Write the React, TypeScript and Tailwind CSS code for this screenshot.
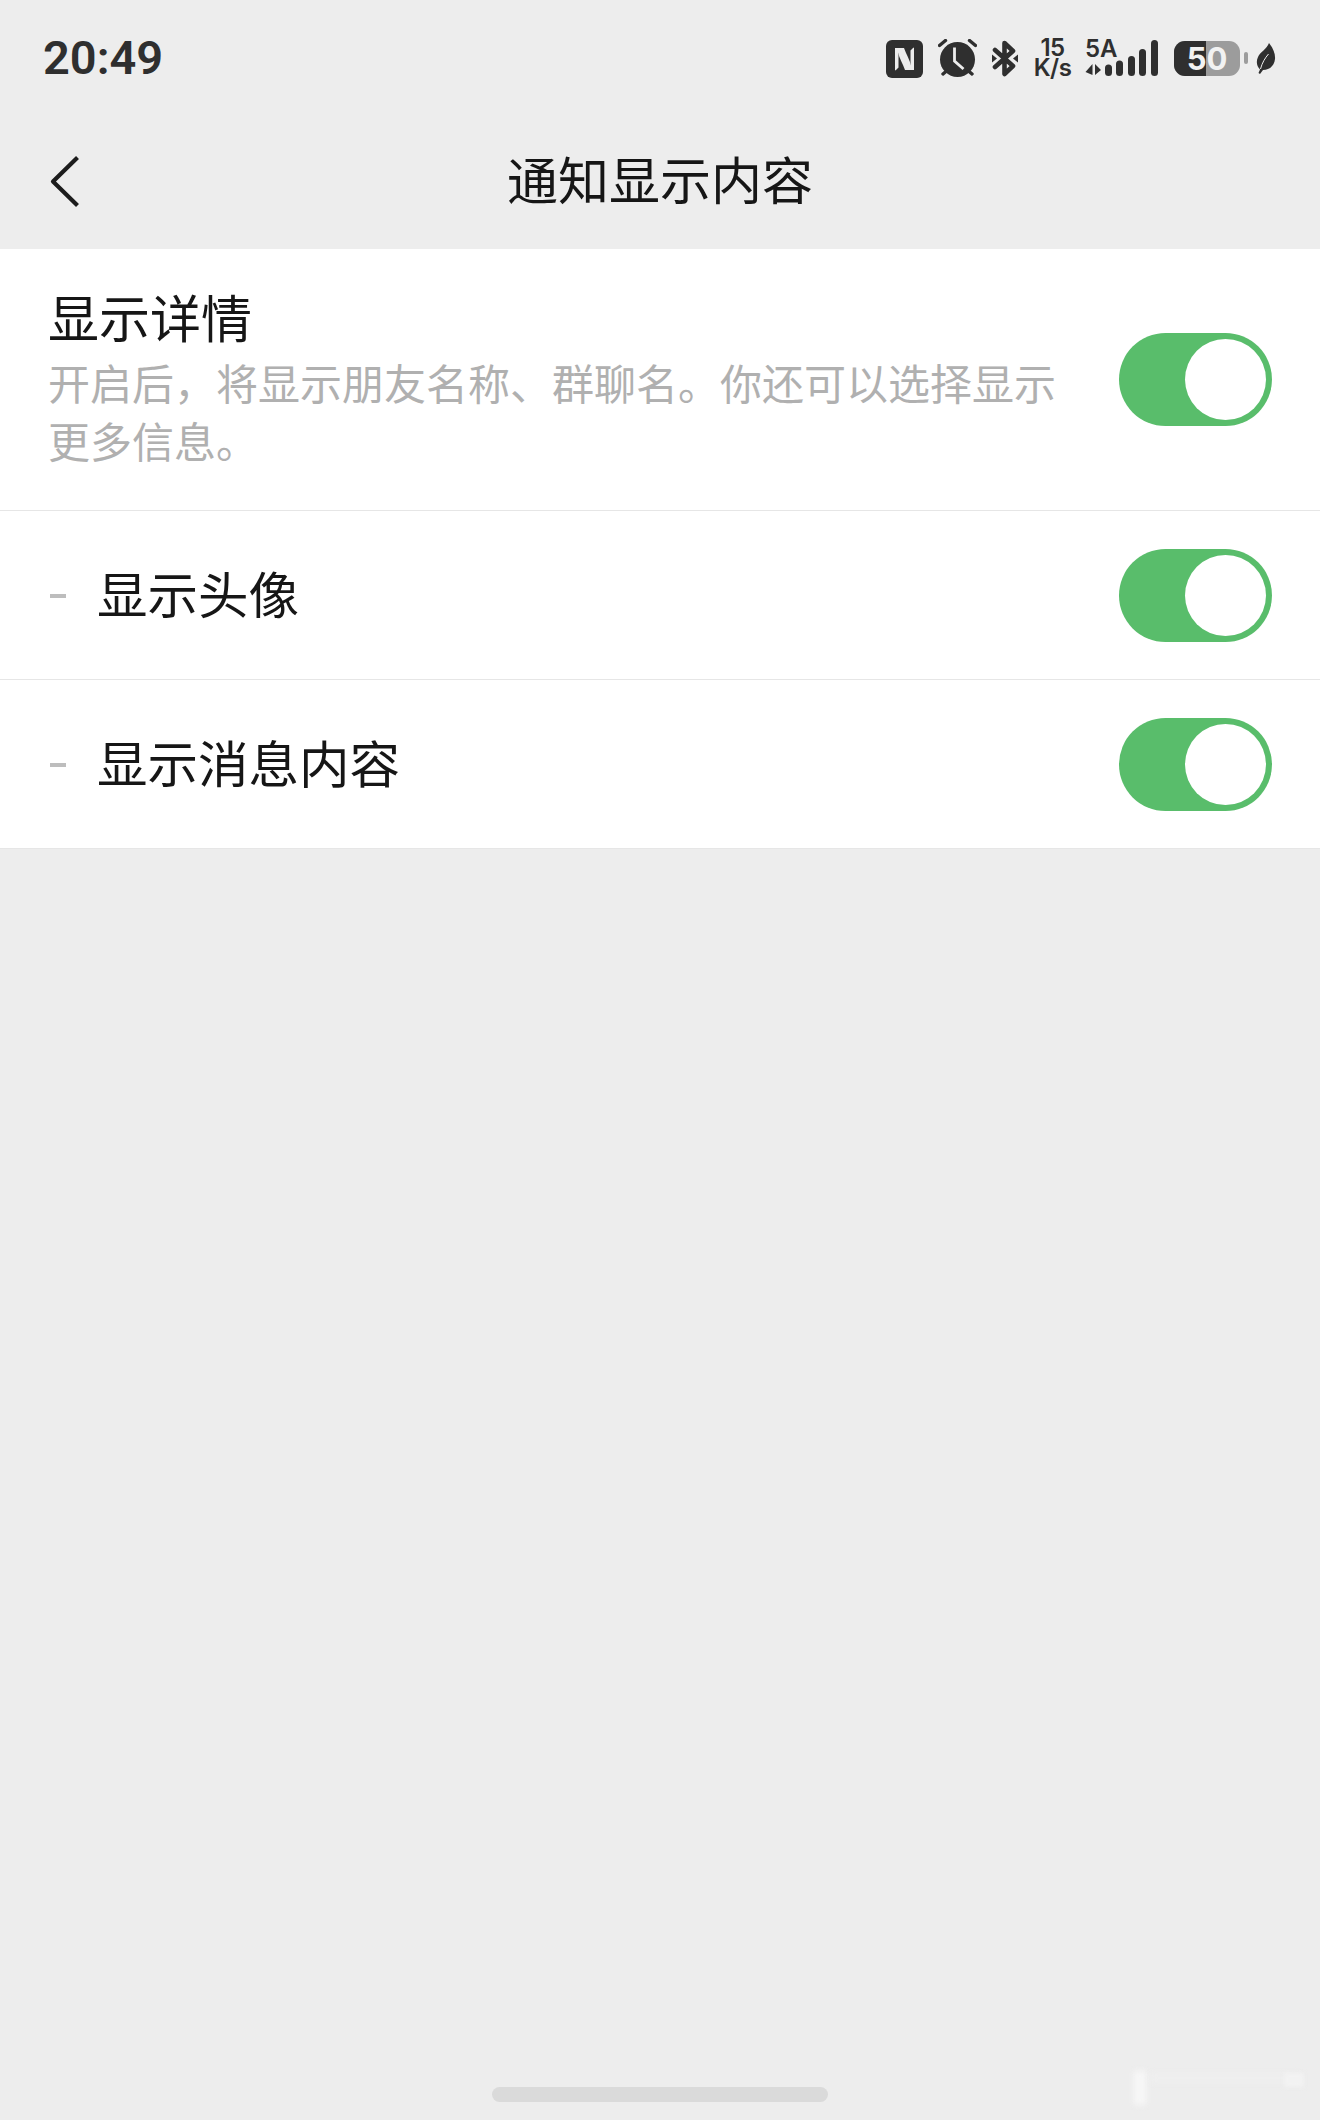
import React from 'react';

const BackIcon = () => (
    <svg width="32" height="54" viewBox="0 0 32 54" fill="none">
        <path d="M28.5 2.5 L4 26.5 L28.5 50.5" stroke="#1c1c1c" strokeWidth="4.2" strokeLinecap="butt" strokeLinejoin="round" />
    </svg>
);

const NfcIcon = () => (
    <svg width="37" height="38" viewBox="0 0 37 38" className="translate-y-[1px]">
        <rect width="37" height="38" rx="6" fill="#2f2f2f" />
        <g fill="#ececec">
            <path d="M9 8 L18 8 C20 14 24 20 25 26 C25 28 24.5 29 24 30 C22 24 17 17 12.5 12.5 L12.5 27.5 L9.5 30.5 L9 30 Z" />
            <path transform="rotate(180 18.5 19)" d="M9 8 L18 8 C20 14 24 20 25 26 C25 28 24.5 29 24 30 C22 24 17 17 12.5 12.5 L12.5 27.5 L9.5 30.5 L9 30 Z" />
        </g>
    </svg>
);

const AlarmIcon = () => (
    <svg width="39" height="38" viewBox="0 0 39 38">
        <circle cx="19.5" cy="20.5" r="17.5" fill="#2f2f2f" />
        <path d="M1.5 6.5 L7.5 1.5 M37.5 6.5 L31.5 1.5 M5 35 L8.5 32 M34 35 L30.5 32" stroke="#2f2f2f" strokeWidth="3.4" strokeLinecap="round" />
        <path d="M16.5 8.5 L16.5 22 L25.5 30" stroke="#ededed" strokeWidth="2.8" fill="none" />
    </svg>
);

const BluetoothIcon = () => (
    <svg width="26" height="37" viewBox="0 0 26 37" fill="none">
        <path d="M3 10 L21 26 L12.5 34 L12.5 3 L21 11 L3 27" stroke="#2f2f2f" strokeWidth="4.6" strokeLinejoin="round" strokeLinecap="round" />
        <path d="M0 14.5 L5 18.5 L0 22.5 Z M26 14.5 L21 18.5 L26 22.5 Z" fill="#2f2f2f" />
    </svg>
);

const SignalIcon = () => (
    <div className="relative w-[74px] h-[38px]">
        <svg width="74" height="38" viewBox="0 0 74 38">
            <path d="M7.5 25 L7.5 36 L0.5 33 Z M10 25 L10 36 L16 31 Z" fill="#2f2f2f" />
            <rect x="20" y="25.5" width="7" height="11.5" rx="3.5" fill="#2f2f2f" />
            <rect x="31" y="21.5" width="7" height="15.5" rx="3.5" fill="#2f2f2f" />
            <rect x="43" y="17" width="7" height="20" rx="3.5" fill="#2f2f2f" />
            <rect x="54" y="10" width="7" height="27" rx="3.5" fill="#2f2f2f" />
            <rect x="66" y="1" width="7" height="36" rx="3.5" fill="#2f2f2f" />
        </svg>
        <span className="absolute left-0 top-0 text-[24px] leading-[20px] font-semibold text-[#2f2f2f] font-['Inter',sans-serif]">5A</span>
    </div>
);

const LeafIcon = () => (
    <svg width="21" height="31" viewBox="0 0 21 31">
        <path d="M14 0 C18 5 20.5 11 20 16 C19.5 23 14 27 8 27 L5 31 L3.5 30 L5 26.5 C1.5 23 1 18 3 14 C5 9 12 6 14 0 Z" fill="#2f2f2f" />
        <path d="M5.5 26 C7 20 10 15 13.5 11" stroke="#ededed" strokeWidth="1" fill="none" />
    </svg>
);

const Battery = () => (
    <div className="flex items-center gap-[4px]">
        <div className="relative w-[66px] h-[35px] rounded-[11px] overflow-hidden flex bg-[#9c9c9c]">
            <div className="w-[32px] bg-[#2f2f2f]" />
            <span className="absolute inset-0 flex items-center justify-center text-[31px] leading-none font-bold text-[#f2f2f2] font-['Inter',sans-serif]">50</span>
        </div>
        <div className="w-[4px] h-[12px] rounded-[2px] bg-[#9c9c9c]" />
    </div>
);

const Toggle = () => (
    <div className="w-[153px] h-[93px] shrink-0 rounded-full bg-[#59bd6b] flex items-center justify-end pr-[6px]">
        <div className="w-[81px] h-[81px] rounded-full bg-white" />
    </div>
);

const SubRow = ({ label }: { label: string }) => (
    <div className="h-[169px] flex items-center justify-between pl-[50px] pr-[48px] bg-white border-b border-[#e6e6e6]">
        <div className="flex items-center">
            <div className="w-[16px] h-[4px] bg-[#bdbdbd] mr-[31px] mt-[2px]" />
            <span className="text-[50.5px] leading-[70px] mt-[-6px] text-[#161616]">{label}</span>
        </div>
        <Toggle />
    </div>
);

const App: React.FC = () => {
    return (
        <div className="relative h-[2120px] w-[1320px] overflow-hidden flex flex-col bg-[#ededed] font-['Noto_Sans_CJK_SC','Noto_Sans',sans-serif]">
            {/* status bar */}
            <div className="h-[108px] shrink-0 flex items-start justify-between pl-[43px] pr-[44px] pt-[28px]">
                <span className="text-[47px] leading-[60px] font-semibold text-[#2f2f2f] font-['Roboto',sans-serif]">20:49</span>
                <div className="flex items-center gap-[15px] mt-[10px]">
                    <NfcIcon />
                    <AlarmIcon />
                    <BluetoothIcon />
                    <div className="w-[39px] text-center whitespace-pre-line text-[24px] leading-[20px] font-semibold tracking-[-0.5px] text-[#2f2f2f] font-['Inter',sans-serif]">
                        {'15\nK/s'}
                    </div>
                    <div className="ml-[-2px]"><SignalIcon /></div>
                    <div className="flex items-center gap-[7px]">
                        <Battery />
                        <LeafIcon />
                    </div>
                </div>
            </div>

            {/* nav bar */}
            <div className="relative h-[141px] shrink-0 flex items-center justify-center">
                <div className="absolute left-[49px] top-[47px]"><BackIcon /></div>
                <span className="text-[51px] leading-[70px] mt-[-2px] text-[#161616]">通知显示内容</span>
            </div>

            {/* settings list */}
            <div className="flex items-center justify-between pl-[48px] pr-[48px] pt-[34px] pb-[41px] bg-white border-b border-[#e6e6e6]">
                <div className="w-[1012px]">
                    <div className="text-[51px] leading-[66px] mb-[4px] text-[#161616]">显示详情</div>
                    <div className="text-[42px] leading-[58px] text-[#b0b0b0]">开启后，将显示朋友名称、群聊名。你还可以选择显示更多信息。</div>
                </div>
                <div className="mt-[7px]"><Toggle /></div>
            </div>
            <SubRow label="显示头像" />
            <SubRow label="显示消息内容" />

            {/* home indicator */}
            <div className="mt-auto pb-[18px] flex justify-center">
                <div className="w-[336px] h-[15px] rounded-full bg-[#dadada]" />
            </div>

            {/* faint watermark, bottom right */}
            <div className="absolute left-[1134px] top-[2071px] w-[12px] h-[34px] bg-[#f7f7f7] blur-[3px]" />
            <div className="absolute left-[1150px] top-[2074px] w-[150px] h-[8px] bg-[#efefef] blur-[3px]" />
            <div className="absolute left-[1284px] top-[2073px] w-[20px] h-[14px] bg-[#f2f2f2] blur-[2px]" />
        </div>
    );
};

export default App;
